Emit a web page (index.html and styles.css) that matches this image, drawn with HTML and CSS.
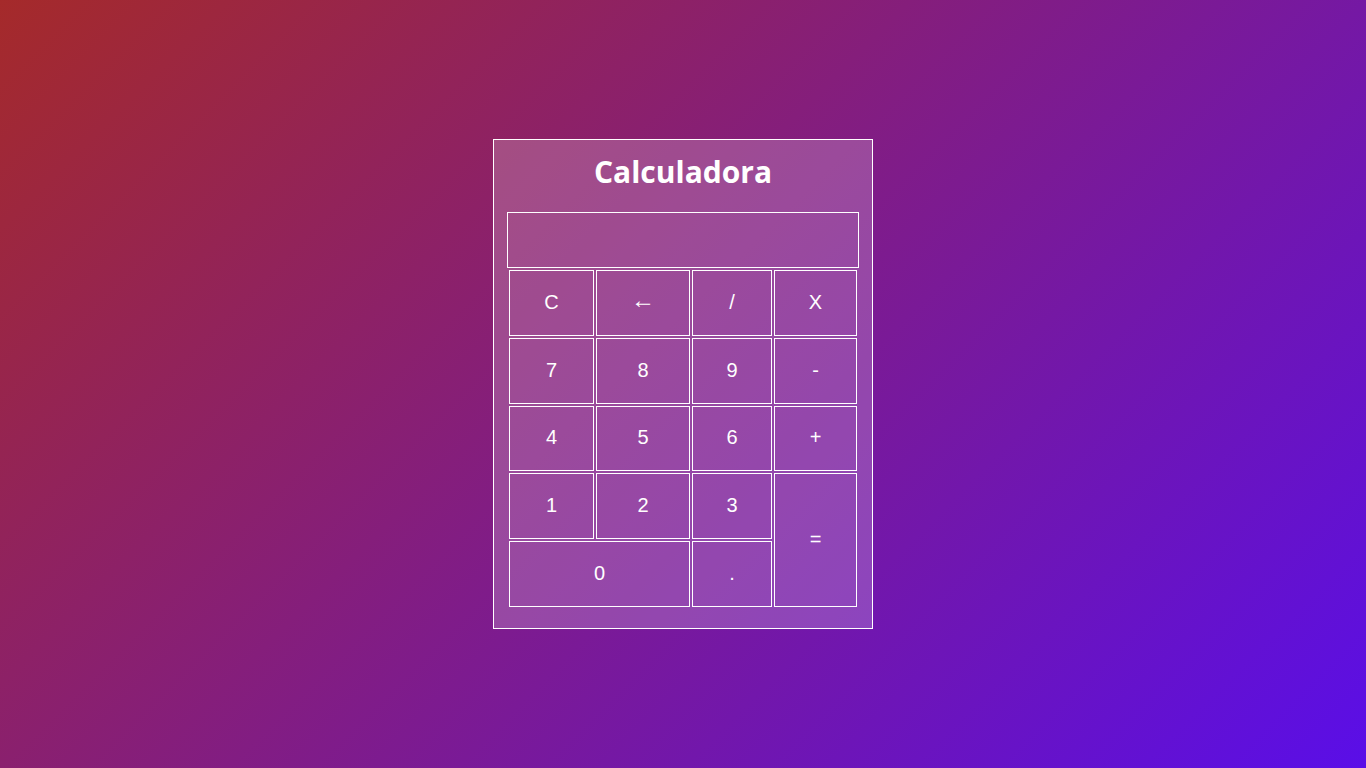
FILE: index.html
```html
<!DOCTYPE html>
<html lang="pt">
<head>
<meta charset="utf-8">
<title>Calculadora</title>
<link rel="stylesheet" href="styles.css">
</head>
<body>
<main class="page">
  <section class="calc">
    <h1 class="calc-title">Calculadora</h1>
    <div class="display"></div>
    <div class="keys">
      <button class="key">C</button>
      <button class="key key-arrow">&larr;</button>
      <button class="key">/</button>
      <button class="key">X</button>
      <button class="key">7</button>
      <button class="key">8</button>
      <button class="key">9</button>
      <button class="key">-</button>
      <button class="key">4</button>
      <button class="key">5</button>
      <button class="key">6</button>
      <button class="key">+</button>
      <button class="key">1</button>
      <button class="key">2</button>
      <button class="key">3</button>
      <button class="key key-equals">=</button>
      <button class="key key-zero">0</button>
      <button class="key">.</button>
    </div>
  </section>
</main>
</body>
</html>
```
FILE: styles.css
```css
* { box-sizing: border-box; }
html, body { margin: 0; height: 100%; }
body {
  background: linear-gradient(135deg, #a52a2a 0%, #5a0ee8 100%);
  font-family: "Open Sans", "Liberation Sans", sans-serif;
  color: #fff;
}
.page {
  height: 100%;
  display: flex;
  justify-content: center;
  padding-top: 139px;
}
.calc {
  width: 380px;
  height: 490px;
  border: 1px solid #fff;
  background: rgba(255, 255, 255, 0.2);
  padding: 0 13px;
  display: flex;
  flex-direction: column;
}
.calc-title {
  margin: 0;
  height: 72px;
  padding-top: 11px;
  text-align: center;
  font-size: 30px;
  font-weight: 700;
  line-height: 42px;
}
.display {
  width: 352px;
  height: 56px;
  border: 1px solid #fff;
}
.keys {
  width: 352px;
  padding: 2px;
  display: grid;
  grid-template-columns: 85px 94px 80px 83px;
  grid-template-rows: 66px 66px 65px 66px 66px;
  gap: 2px;
}
.key {
  margin: 0;
  border: 1px solid #fff;
  background: transparent;
  color: #fff;
  font-family: "Liberation Sans", Arial, sans-serif;
  font-size: 20px;
  padding: 0 0 2px 0;
}
.key-arrow { font-size: 24px; padding-bottom: 6px; }
.key-equals { grid-column: 4; grid-row: 4 / span 2; }
.key-zero { grid-column: 1 / span 2; }
```
